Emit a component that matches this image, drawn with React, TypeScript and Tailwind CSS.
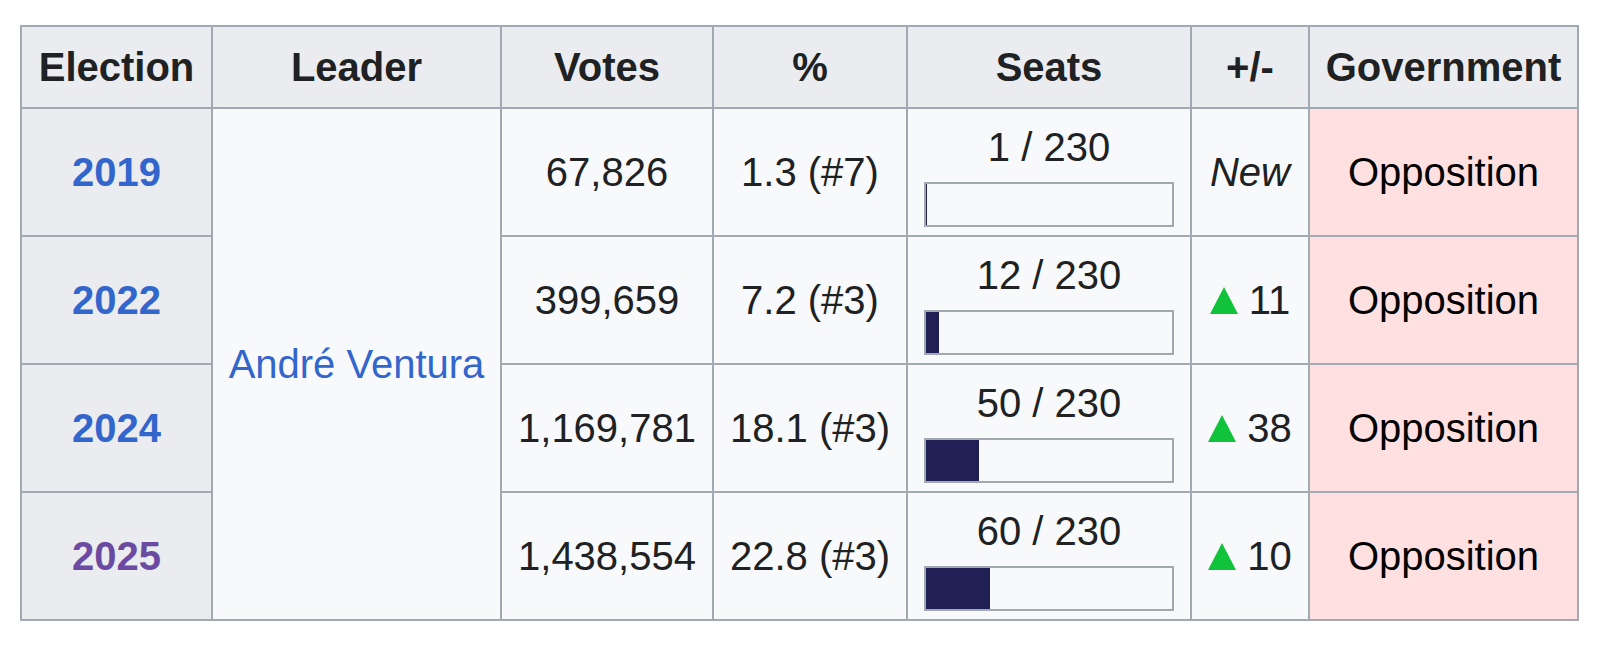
import React from 'react';

type Row = {
  year: string;
  visited?: boolean;
  votes: string;
  pct: string;
  seats: number;
  change: string | null;
};

const rows: Row[] = [
  { year: '2019', votes: '67,826', pct: '1.3 (#7)', seats: 1, change: null },
  { year: '2022', votes: '399,659', pct: '7.2 (#3)', seats: 12, change: '11' },
  { year: '2024', votes: '1,169,781', pct: '18.1 (#3)', seats: 50, change: '38' },
  { year: '2025', visited: true, votes: '1,438,554', pct: '22.8 (#3)', seats: 60, change: '10' },
];

const TOTAL = 230;

function SeatBar({ seats }: { seats: number }) {
  return (
    <div className="w-[250px] h-[45px] border-2 border-[#a2a9b1] bg-[#f8f9fa]">
      <div className="h-full bg-[#212054]" style={{ width: `${(seats / TOTAL) * 100}%` }} />
    </div>
  );
}

function Increase() {
  return (
    <svg width="28" height="27" viewBox="0 0 28 27" className="inline-block align-baseline mr-[11px]">
      <polygon points="14,0 28,27 0,27" fill="#10c33a" />
    </svg>
  );
}

export default function App() {
  const th = 'border-2 border-[#a2a9b1] bg-[#eaecf0] font-bold text-center p-0';
  const td = 'border-2 border-[#a2a9b1] bg-[#f8f9fa] text-center p-0';

  return (
    <div className="bg-white min-h-[650px] pt-[25px] pl-[20px] text-[#202122] text-[40px] font-['Liberation_Sans',Arial,sans-serif]">
      <table className="table-fixed border-collapse w-[1557px]">
        <colgroup>
          <col className="w-[191px]" />
          <col className="w-[289px]" />
          <col className="w-[212px]" />
          <col className="w-[194px]" />
          <col className="w-[284px]" />
          <col className="w-[118px]" />
          <col className="w-[269px]" />
        </colgroup>
        <thead>
          <tr className="h-[82px]">
            <th className={th}>Election</th>
            <th className={th}>Leader</th>
            <th className={th}>Votes</th>
            <th className={th}>%</th>
            <th className={th}>Seats</th>
            <th className={th}>+/-</th>
            <th className={th}>Government</th>
          </tr>
        </thead>
        <tbody>
          {rows.map((r, i) => (
            <tr key={r.year} className="h-[128px]">
              <th className={th}>
                <span className={r.visited ? 'text-[#6b4ba1]' : 'text-[#3366cc]'}>{r.year}</span>
              </th>
              {i === 0 && (
                <td rowSpan={4} className={td}>
                  <span className="text-[#3366cc]">André Ventura</span>
                </td>
              )}
              <td className={td}>{r.votes}</td>
              <td className={td}>{r.pct}</td>
              <td className={`${td} align-top`}>
                <div className="flex flex-col items-center pt-[18px]">
                  <div className="leading-[40px]">
                    {r.seats} / {TOTAL}
                  </div>
                  <div className="mt-[15px]">
                    <SeatBar seats={r.seats} />
                  </div>
                </div>
              </td>
              <td className={td}>
                {r.change === null ? (
                  <i>New</i>
                ) : (
                  <span className="whitespace-nowrap">
                    <Increase />
                    {r.change}
                  </span>
                )}
              </td>
              <td className="border-2 border-[#a2a9b1] bg-[#ffe0e0] text-center p-0 text-black">Opposition</td>
            </tr>
          ))}
        </tbody>
      </table>
    </div>
  );
}
